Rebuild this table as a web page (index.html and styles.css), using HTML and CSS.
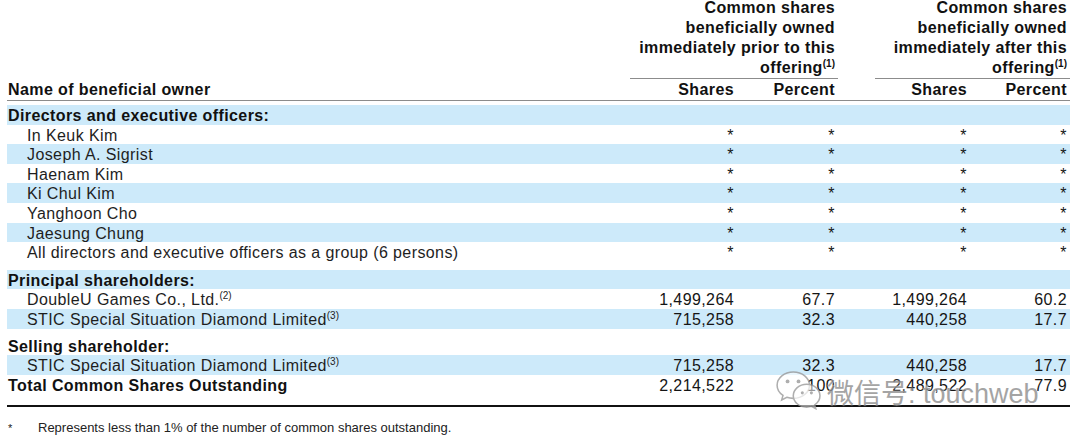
FILE: index.html
```html
<!DOCTYPE html>
<html>
<head>
<meta charset="utf-8">
<title>Beneficial ownership</title>
<link rel="stylesheet" href="styles.css">
</head>
<body>
<div class="page">
  <table class="own">
    <colgroup>
      <col class="c-name"><col class="c-num"><col class="c-pct"><col class="c-sp"><col class="c-num2"><col class="c-pct2">
    </colgroup>
    <thead>
      <tr class="grp">
        <th></th>
        <th colspan="2" class="gh">Common shares<br>beneficially owned<br>immediately prior to this<br>offering<sup>(1)</sup></th>
        <th></th>
        <th colspan="2" class="gh">Common shares<br>beneficially owned<br>immediately after this<br>offering<sup>(1)</sup></th>
      </tr>
      <tr class="sub">
        <th class="nm">Name of beneficial owner</th>
        <th>Shares</th>
        <th>Percent</th>
        <th></th>
        <th>Shares</th>
        <th>Percent</th>
      </tr>
    </thead>
    <tbody>
      <tr class="gap g-top"><td colspan="6"></td></tr>
      <tr class="band"><td class="sec" colspan="6">Directors and executive officers:</td></tr>
      <tr><td class="ind">In Keuk Kim</td><td>*</td><td>*</td><td></td><td>*</td><td>*</td></tr>
      <tr class="band"><td class="ind">Joseph A. Sigrist</td><td>*</td><td>*</td><td></td><td>*</td><td>*</td></tr>
      <tr><td class="ind">Haenam Kim</td><td>*</td><td>*</td><td></td><td>*</td><td>*</td></tr>
      <tr class="band"><td class="ind">Ki Chul Kim</td><td>*</td><td>*</td><td></td><td>*</td><td>*</td></tr>
      <tr><td class="ind">Yanghoon Cho</td><td>*</td><td>*</td><td></td><td>*</td><td>*</td></tr>
      <tr class="band"><td class="ind">Jaesung Chung</td><td>*</td><td>*</td><td></td><td>*</td><td>*</td></tr>
      <tr><td class="ind">All directors and executive officers as a group (6 persons)</td><td>*</td><td>*</td><td></td><td>*</td><td>*</td></tr>
      <tr class="gap g-mid"><td colspan="6"></td></tr>
      <tr class="band"><td class="sec" colspan="6">Principal shareholders:</td></tr>
      <tr><td class="ind">DoubleU Games Co., Ltd.<sup>(2)</sup></td><td>1,499,264</td><td>67.7</td><td></td><td>1,499,264</td><td>60.2</td></tr>
      <tr class="band"><td class="ind">STIC Special Situation Diamond Limited<sup>(3)</sup></td><td>715,258</td><td>32.3</td><td></td><td>440,258</td><td>17.7</td></tr>
      <tr class="gap g-sell"><td colspan="6"></td></tr>
      <tr><td class="sec" colspan="6">Selling shareholder:</td></tr>
      <tr class="band"><td class="ind">STIC Special Situation Diamond Limited<sup>(3)</sup></td><td>715,258</td><td>32.3</td><td></td><td>440,258</td><td>17.7</td></tr>
      <tr><td class="sec">Total Common Shares Outstanding</td><td>2,214,522</td><td>100</td><td></td><td>2,489,522</td><td>77.9</td></tr>
      <tr class="gap rule"><td colspan="6"></td></tr>
    </tbody>
  </table>
  <p class="foot"><span class="fmark">*</span><span>Represents less than 1% of the number of common shares outstanding.</span></p>

  <div class="watermark">
    <svg class="wm-icon" width="48" height="40" viewBox="0 0 50 42" aria-hidden="true">
      <path d="M19 2C9.6 2 2 8.3 2 16C2 20.3 4.4 24.1 8.2 26.7L6.8 31.5L12.2 28.7C14.3 29.4 16.6 29.8 19 29.8C28.4 29.8 36 23.6 36 16C36 8.3 28.4 2 19 2Z" fill="rgba(255,255,255,0.7)" stroke="#9a9a9a" stroke-width="1.6"/>
      <circle cx="13" cy="12" r="2" fill="#9a9a9a"/>
      <circle cx="24.5" cy="12" r="2" fill="#9a9a9a"/>
      <path d="M33 15C25.3 15 19 20.3 19 27C19 33.6 25.3 39 33 39C34.8 39 36.5 38.7 38.1 38.2L42.6 40.6L41.5 36.5C44.8 34.3 47 30.9 47 27C47 20.3 40.7 15 33 15Z" fill="rgba(255,255,255,0.7)" stroke="#9a9a9a" stroke-width="1.6"/>
      <circle cx="28.5" cy="24" r="1.6" fill="#9a9a9a"/>
      <circle cx="38" cy="24" r="1.6" fill="#9a9a9a"/>
    </svg>
    <span class="wm-text">微信号: touchweb</span>
  </div>
</div>
</body>
</html>
```

FILE: styles.css
```css
* { box-sizing: border-box; }

html, body {
  margin: 0;
  padding: 0;
  background: #ffffff;
}

body {
  font-family: "Liberation Sans", Arial, sans-serif;
  font-size: 16px;
  color: #151515;
}

.page {
  position: relative;
  padding: 0 10px 0 7px;
}

.own {
  width: 1063px;
  table-layout: fixed;
  border-collapse: separate;
  border-spacing: 0;
  margin-top: -2px;
}

.c-name { width: 623px; }
.c-num { width: 107px; }
.c-pct { width: 101px; }
.c-sp { width: 37px; }
.c-num2 { width: 95px; }
.c-pct2 { width: 100px; }

th, td {
  padding: 0 3px 0 0;
  line-height: 19.6px;
  letter-spacing: 0.4px;
  text-align: right;
  vertical-align: bottom;
  white-space: nowrap;
  font-weight: normal;
}

tbody td {
  padding-top: 2px;
  line-height: 17.6px;
}

th {
  font-weight: bold;
  color: #111;
}

.grp th {
  line-height: 20px;
}

.gh {
  border-bottom: 1px solid #8c8c8c;
}

.sub th {
  line-height: 20px;
  padding-top: 1px;
  border-bottom: 1px solid #8c8c8c;
}

.sub .nm {
  text-align: left;
  padding-left: 1px;
}

sup {
  font-size: 10px;
  line-height: 0;
  letter-spacing: 0;
  vertical-align: 6px;
}

td.sec {
  text-align: left;
  font-weight: bold;
  padding-left: 1px;
  color: #111;
}

td.ind {
  text-align: left;
  padding-left: 20px;
  color: #1e1e1e;
}

.band td {
  background: #cdeafa;
}

.gap td {
  padding: 0;
  line-height: 0;
}

.g-top td { height: 4px; }
.g-mid td { height: 8px; }
.g-sell td { height: 7px; }

.rule td {
  height: 12.6px;
  border-bottom: 2px solid #111;
}

.foot {
  display: flex;
  margin: 13px 0 0 1px;
  font-size: 13px;
  line-height: 16px;
  color: #222;
}

.fmark {
  width: 30px;
  font-size: 11px;
}

.watermark {
  position: absolute;
  left: 775px;
  top: 372px;
  display: flex;
  align-items: flex-end;
  gap: 4px;
  opacity: 0.8;
}

.wm-text {
  font-family: "Liberation Sans", "Noto Sans CJK SC", sans-serif;
  font-size: 27px;
  line-height: 32px;
  color: #8e8e8e;
  text-shadow: 0 0 2px #ffffff, 0 0 1px #ffffff;
}
```
